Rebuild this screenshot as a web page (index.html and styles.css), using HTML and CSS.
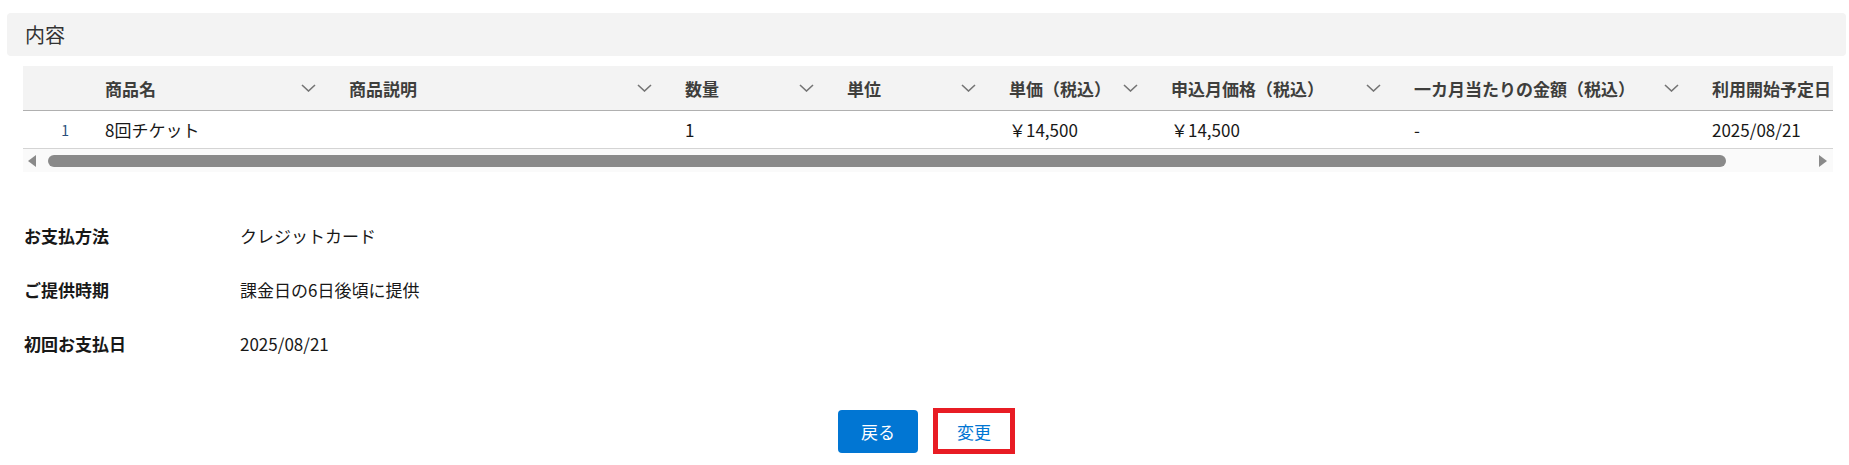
FILE: index.html
```html
<!DOCTYPE html>
<html lang="ja">
<head>
<meta charset="utf-8">
<title>内容</title>
<link rel="stylesheet" href="styles.css">
</head>
<body>
<div class="page">
	<div class="section-title">内容</div>

	<div class="table-wrap">
		<div class="table-clip">
			<table class="items">
				<colgroup>
					<col class="c-num"><col class="c-name"><col class="c-desc"><col class="c-qty"><col class="c-unit">
					<col class="c-price"><col class="c-month"><col class="c-permonth"><col class="c-start">
				</colgroup>
				<thead>
					<tr>
						<th></th>
						<th><div class="th-in"><span>商品名</span><svg class="chev" viewBox="0 0 15 8"><path d="M1 1l6.5 6 6.5-6"/></svg></div></th>
						<th><div class="th-in"><span>商品説明</span><svg class="chev" viewBox="0 0 15 8"><path d="M1 1l6.5 6 6.5-6"/></svg></div></th>
						<th><div class="th-in"><span>数量</span><svg class="chev" viewBox="0 0 15 8"><path d="M1 1l6.5 6 6.5-6"/></svg></div></th>
						<th><div class="th-in"><span>単位</span><svg class="chev" viewBox="0 0 15 8"><path d="M1 1l6.5 6 6.5-6"/></svg></div></th>
						<th><div class="th-in"><span>単価（税込）</span><svg class="chev" viewBox="0 0 15 8"><path d="M1 1l6.5 6 6.5-6"/></svg></div></th>
						<th><div class="th-in"><span>申込月価格（税込）</span><svg class="chev" viewBox="0 0 15 8"><path d="M1 1l6.5 6 6.5-6"/></svg></div></th>
						<th><div class="th-in"><span>一カ月当たりの金額（税込）</span><svg class="chev" viewBox="0 0 15 8"><path d="M1 1l6.5 6 6.5-6"/></svg></div></th>
						<th><div class="th-in"><span>利用開始予定日</span><svg class="chev" viewBox="0 0 15 8"><path d="M1 1l6.5 6 6.5-6"/></svg></div></th>
					</tr>
				</thead>
				<tbody>
					<tr>
						<td class="num">1</td>
						<td>8回チケット</td>
						<td></td>
						<td>1</td>
						<td></td>
						<td>￥14,500</td>
						<td>￥14,500</td>
						<td>-</td>
						<td>2025/08/21</td>
					</tr>
				</tbody>
			</table>
		</div>
		<div class="hscroll">
			<span class="arrow left"></span>
			<div class="track"><div class="thumb"></div></div>
			<span class="arrow right"></span>
		</div>
	</div>

	<div class="details">
		<div class="row"><div class="label">お支払方法</div><div class="value">クレジットカード</div></div>
		<div class="row"><div class="label">ご提供時期</div><div class="value">課金日の6日後頃に提供</div></div>
		<div class="row"><div class="label">初回お支払日</div><div class="value">2025/08/21</div></div>
	</div>

	<div class="actions">
		<button class="btn brand">戻る</button>
		<button class="btn marked">変更</button>
	</div>
</div>
</body>
</html>
```

FILE: styles.css
```css
html,body{margin:0;padding:0;background:#fff;}
body{font-family:"Noto Sans CJK JP","Noto Sans",sans-serif;color:#181818;font-size:17px;}
.page{padding:13px 3px 0 7px;}

.section-title{background:#f3f3f3;border-radius:4px;height:43px;line-height:43px;padding-left:18px;font-size:20px;color:#333;}

.table-wrap{margin:10px 13px 0 16px;}
.table-clip{overflow:hidden;}
.items{border-collapse:collapse;table-layout:fixed;width:1877px;}
.c-num{width:70px;}
.c-name{width:244px;}
.c-desc{width:336px;}
.c-qty,.c-unit,.c-price{width:162px;}
.c-month{width:243px;}
.c-permonth{width:298px;}
.c-start{width:200px;}
.items th{background:#f3f3f3;height:44px;padding:0;text-align:left;font-weight:bold;color:#3e3e3c;border-bottom:1px solid #b0b0b0;white-space:nowrap;}
.th-in{display:flex;align-items:center;justify-content:space-between;padding:0 21px 0 12px;}
.chev{width:15px;height:8px;fill:none;stroke:#747474;stroke-width:1.6;}
.items td{height:37px;padding:0 12px;border-bottom:1px solid #d4d4d4;white-space:nowrap;color:#181818;}
.items td.num{text-align:right;padding-right:24px;font-size:14px;color:#2a4f7a;}

.hscroll{display:flex;align-items:center;height:23px;background:#fafafa;}
.arrow{width:0;height:0;border-top:6px solid transparent;border-bottom:6px solid transparent;}
.arrow.left{border-right:8px solid #8a8a8a;margin:0 12px 0 5px;}
.arrow.right{border-left:8px solid #8a8a8a;margin:0 6px 0 12px;}
.track{flex:1;}
.thumb{height:12px;width:1678px;background:#8a8a8a;border-radius:6px;}

.details{padding:36px 0 0 17px;}
.details .row{display:flex;height:54px;align-items:center;}
.details .label{width:216px;font-weight:bold;}
.details .value{color:#181818;}

.actions{display:flex;justify-content:center;align-items:center;gap:15px;margin-top:38px;}
.btn{font-family:inherit;font-size:17px;cursor:pointer;}
.btn.brand{background:#0176d3;color:#fff;border:0;border-radius:4px;width:80px;height:43px;}
.btn.marked{background:#fff;color:#0176d3;border:5px solid #e81c24;width:82px;height:46px;border-radius:0;}
```
